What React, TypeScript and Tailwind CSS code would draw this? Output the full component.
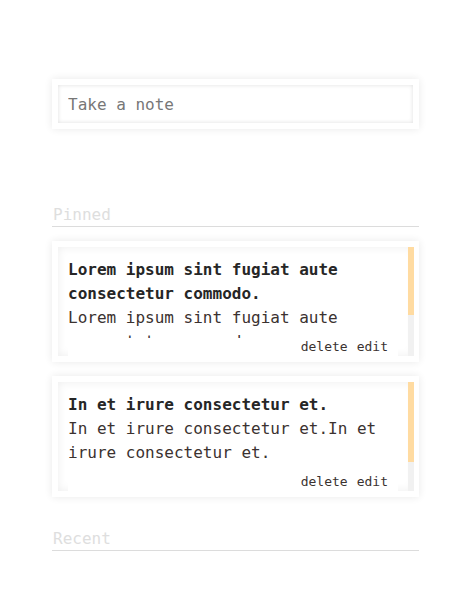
import React from "react";

const notes = [
  {
    title: "Lorem ipsum sint fugiat aute consectetur commodo.",
    body: "Lorem ipsum sint fugiat aute consectetur commodo.",
    thumb: 68,
  },
  {
    title: "In et irure consectetur et.",
    body: "In et irure consectetur et.In et irure consectetur et.",
    thumb: 80,
  },
];

function SectionHeader({ label }: { label: string }) {
  return (
    <div className="h-[25px] border-b border-[#dcdcdc] text-[16px] leading-[24px] text-[#dedede] pl-px">
      <span className="inline-block translate-y-px">{label}</span>
    </div>
  );
}

function NoteCard({ title, body, thumb }: { title: string; body: string; thumb: number }) {
  return (
    <div className="bg-white p-[6px] pr-[5px] shadow-[0_0_8px_rgba(0,0,0,0.09)]">
      <div className="flex h-[109px] bg-white shadow-[inset_0_0_10px_rgba(0,0,0,0.07)]">
        <div className="flex min-w-0 flex-1 flex-col">
          <div className="flex-1 overflow-hidden px-[10px] pt-[11px]">
            <div className="text-[16px] font-bold leading-[24px] text-[#262626]">{title}</div>
            <div className="text-[16px] leading-[24px] text-[#3b3230]">{body}</div>
          </div>
          <div className="mx-[10px] flex h-[18px] items-center justify-end gap-[9px] bg-white pr-[10px] text-[13px] leading-[18px] text-[#3b3230]">
            <span>delete</span>
            <span>edit</span>
          </div>
        </div>
        <div className="flex w-[6px] flex-col bg-[#f1f1f1]">
          <div className="bg-[#ffdba1]" style={{ height: thumb }} />
        </div>
      </div>
    </div>
  );
}

export default function App() {
  return (
    <div className="min-h-[610px] bg-white font-['DejaVu_Sans_Mono','Liberation_Mono',monospace]">
      <div className="ml-[52px] w-[367px] pt-[79px]">
        <div className="bg-white p-[6px] shadow-[0_0_8px_rgba(0,0,0,0.09)]">
          <input
            className="block h-[38px] w-full bg-white px-[10px] text-[16px] text-[#333] outline-none shadow-[inset_0_0_4px_rgba(0,0,0,0.13)] placeholder:text-[#777]"
            placeholder="Take a note"
          />
        </div>

        <div className="mt-[73px]">
          <SectionHeader label="Pinned" />
        </div>

        <div className="mt-[14px] flex flex-col gap-[14px]">
          {notes.map((n, i) => (
            <NoteCard key={i} {...n} />
          ))}
        </div>

        <div className="mt-[29px]">
          <SectionHeader label="Recent" />
        </div>
      </div>
    </div>
  );
}
